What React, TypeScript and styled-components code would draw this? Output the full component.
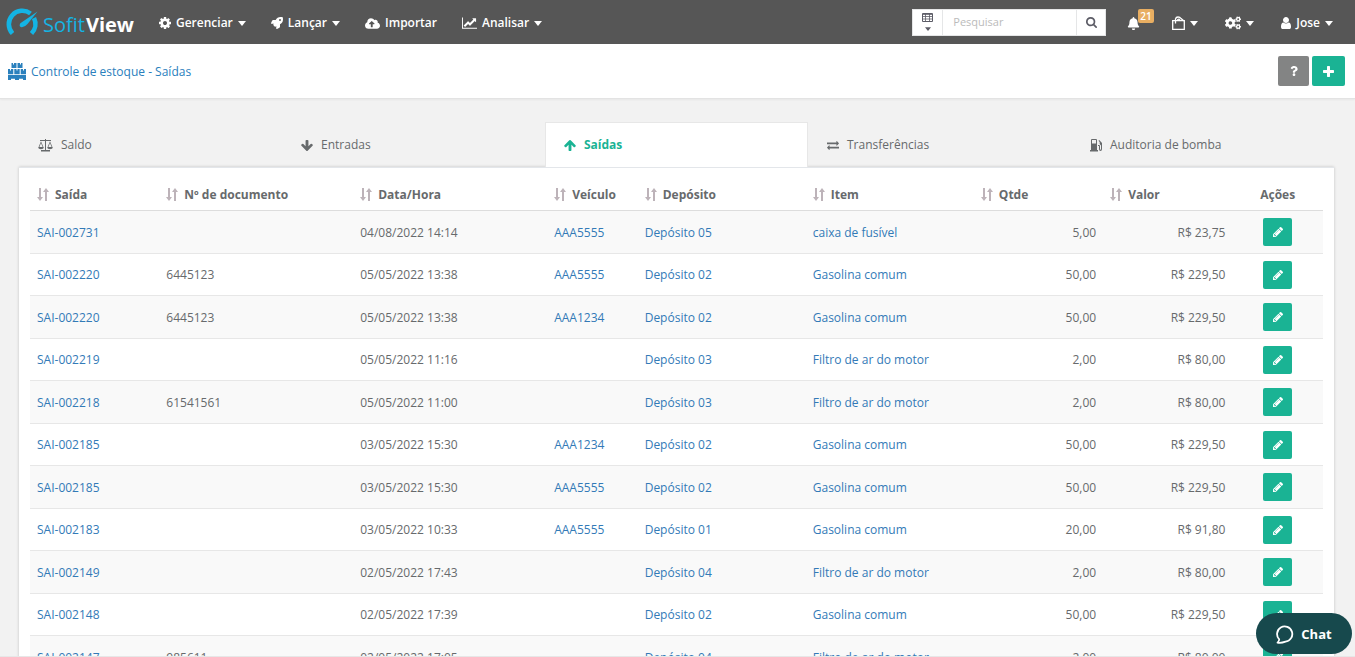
import React from "react";
import styled, { createGlobalStyle, css } from "styled-components";
import { FaBell, FaCloudUploadAlt, FaCogs, FaRocket, FaQuestion } from "react-icons/fa";

const GlobalStyle = createGlobalStyle`
  *, *::before, *::after { box-sizing: border-box; }
  body {
    margin: 0;
    background: #f2f2f2;
    color: #676a6c;
    font-family: "Open Sans", "Liberation Sans", sans-serif;
    font-size: 12px;
    line-height: 18px;
  }
  button, input { font: inherit; }
  a { text-decoration: none; }
`;

/* ---------- icons ---------- */

const glyphs = {
  cog: {
    box: "128 128 1536 1536",
    d: "M1152 896q0-106-75-181t-181-75-181 75-75 181 75 181 181 75 181-75 75-181zm512-109v222q0 12-8 23t-20 13l-185 28q-19 54-39 91 35 50 107 138 10 12 10 25t-9 23q-27 37-99 108t-94 71q-12 0-26-9l-138-108q-44 23-91 38-16 136-29 186-7 28-36 28h-222q-14 0-24.5-8.5t-11.5-21.5l-28-184q-49-16-90-37l-141 107q-10 9-25 9-14 0-25-11-126-114-165-168-7-10-7-23 0-12 8-23 15-21 51-66.5t54-70.5q-27-50-41-99l-183-27q-13-2-21-12.5t-8-23.5v-222q0-12 8-23t19-13l186-28q14-46 39-92-40-57-107-138-10-12-10-24 0-10 9-23 26-36 98.5-107.5t94.5-71.5q13 0 26 10l138 107q44-23 91-38 16-136 29-186 7-28 36-28h222q14 0 24.5 8.5t11.5 21.5l28 184q49 16 90 37l142-107q9-9 24-9 13 0 25 10 129 119 165 170 7 8 7 22 0 12-8 23-15 21-51 66.5t-54 70.5q26 50 41 98l183 28q13 2 21 12.5t8 23.5z",
  },
  chart: {
    box: "0 128 2048 1536",
    d: "M2048 1536v128h-2048v-1536h128v1408h1920zm-128-1248v435q0 21-19.5 29.5t-35.5-7.5l-121-121-633 633q-10 10-23 10t-23-10l-233-233-416 416-192-192 585-585q10-10 23-10t23 10l233 233 464-464-121-121q-16-16-7.5-35.5t29.5-19.5h435q14 0 23 9t9 23z",
  },
  search: {
    box: "64 128 1664 1664",
    d: "M1216 832q0-185-131.5-316.5t-316.5-131.5-316.5 131.5-131.5 316.5 131.5 316.5 316.5 131.5 316.5-131.5 131.5-316.5zm512 832q0 52-38 90t-90 38q-54 0-90-38l-343-342q-179 124-399 124-143 0-273.5-55.5t-225-150-150-225-55.5-273.5 55.5-273.5 150-225 225-150 273.5-55.5 273.5 55.5 225 150 150 225 55.5 273.5q0 220-124 399l343 343q37 37 37 90z",
  },
  user: {
    box: "256 128 1280 1536",
    d: "M1536 1399q0 109-62.5 187t-150.5 78h-854q-88 0-150.5-78t-62.5-187q0-85 8.5-160.5t31.5-152 58.5-131 94-89 134.5-34.5q131 128 313 128t313-128q76 0 134.5 34.5t94 89 58.5 131 31.5 152 8.5 160.5zm-256-887q0 159-112.5 271.5t-271.5 112.5-271.5-112.5-112.5-271.5 112.5-271.5 271.5-112.5 271.5 112.5 112.5 271.5z",
  },
  plus: {
    box: "192 128 1408 1408",
    d: "M1600 736v192q0 40-28 68t-68 28h-416v416q0 40-28 68t-68 28h-192q-40 0-68-28t-28-68v-416h-416q-40 0-68-28t-28-68v-192q0-40 28-68t68-28h416v-416q0-40 28-68t68-28h192q40 0 68 28t28 68v416h416q40 0 68 28t28 68z",
  },
  up: {
    box: "117 192 1558 1472",
    d: "M1675 971q0 51-37 90l-75 75q-38 38-91 38-54 0-90-38l-294-293v704q0 52-37.5 84.5t-90.5 32.5h-128q-53 0-90.5-32.5t-37.5-84.5v-704l-294 293q-36 38-90 38t-90-38l-75-75q-38-38-38-90 0-53 38-91l651-651q35-37 90-37 54 0 91 37l651 651q37 39 37 91z",
  },
  down: {
    box: "0 0 1558 1472",
    d: "M0 693q0-51 37-90l75-75q38-38 91-38 54 0 90 38l294 293v-704q0-52 37.500-84.500t90.500-32.500h128q53 0 90.500 32.500t37.500 84.500v704l294-293q36-38 90-38t90 38l75 75q38 38 38 90 0 53-38 91l-651 651q-35 37-90 37-54 0-91-37l-651-651q-37-39-37-91z",
  },
  exchange: {
    box: "0 288 1792 1344",
    d: "M1792 1184v192q0 13-9.500 22.500t-22.500 9.500h-1376v192q0 13-9.500 22.500t-22.500 9.500q-12 0-24-10l-319-320q-9-9-9-22 0-14 9-23l320-320q9-9 23-9 13 0 22.500 9.500t9.500 22.500v192h1376q13 0 22.500 9.500t9.500 22.500zm0-544q0 14-9 23l-320 320q-9 9-23 9-13 0-22.500-9.500t-9.500-22.500v-192h-1376q-13 0-22.500-9.500t-9.500-22.500v-192q0-13 9.500-22.500t22.500-9.500h1376v-192q0-14 9-23t23-9q12 0 24 10l319 319q9 9 9 23z",
  },
  pencil: {
    box: "128 149 1515 1515",
    d: "M491 1536l91-91-235-235-91 91v107h128v128h107zm523-928q0-22-22-22-10 0-17 7l-542 542q-7 7-7 17 0 22 22 22 10 0 17-7l542-542q7-7 7-17zm-54-192l416 416-832 832h-416v-416zm683 96q0 53-37 90l-166 166-416-416 166-165q36-38 90-38 53 0 91 38l235 234q37 39 37 91z",
  },
  caret: { box: "0 0 8 5", d: "M0 0h8L4 5z" },
  sort: {
    box: "0 0 12 13",
    d: "M2 0h2v9h2L3 13 0 9h2zM8 13h2V4h2L9 0 6 4h2z",
  },
  scale: {
    box: "0 0 15 13",
    d: "M7 0h1v1h5v1H8v9h4v1.500H3V11h4V2H2V1h5zM3 2.200 5.600 8.500H.4zM3 4 1.400 8h3.200zM12 2.200l2.600 6.300H9.400zM12 4l-1.600 4h3.200zM0 8.500h6Q5.500 10.300 3 10.300T0 8.500zm9 0h6q-.5 1.800-3 1.800T9 8.500z",
  },
  pump: {
    box: "0 0 12 13",
    d: "M1 1q0-1 1-1h4q1 0 1 1v10h1v1.500H0V11h1zm1 0v3.500h4V1zM8 6h1q1 0 1 1v3q0 .8.5.8T11 10V6.500L9.700 5V3L8.500 1.800l.7-.7L12 4v6q0 2-1.500 2T9 10V7H8z",
  },
};

type Glyph = keyof typeof glyphs;

const IconSvg = styled.svg`
  flex: none;
  display: block;
  fill: currentColor;
`;

function Icon({ name, w, h }: { name: Glyph; w: number; h: number }) {
  return (
    <IconSvg width={w} height={h} viewBox={glyphs[name].box} fillRule="evenodd" aria-hidden="true">
      <path d={glyphs[name].d} />
    </IconSvg>
  );
}

/* ---------- page shell ---------- */

const Page = styled.div`
  display: flex;
  flex-direction: column;
  height: 100vh;
  overflow: hidden;
  border-bottom: 1px solid #e7e7e7;
`;

const Navbar = styled.header`
  flex: none;
  display: flex;
  align-items: center;
  height: 44px;
  padding: 0 22px 0 6px;
  background: #565656;
  color: #fff;
`;

const Logo = styled.a`
  display: flex;
  align-items: center;
  width: 132px;
  gap: 4px;
  color: #14b4e4;
  font-family: "Open Sans", "Noto Sans", sans-serif;
  font-size: 20px;
  line-height: 30px;
  white-space: nowrap;
  svg { flex: none; }
`;

const LogoText = styled.span`
  padding-top: 5px;
  font-weight: 400;
  strong {
    margin-left: 1px;
    color: #fff;
    font-weight: 700;
  }
`;

const Menu = styled.nav`
  display: flex;
  align-items: center;
  gap: 25px;
  margin-left: 21px;
  padding-top: 2px;
`;

const NavButton = styled.button`
  display: flex;
  align-items: center;
  gap: 5px;
  padding: 0;
  border: 0;
  background: none;
  color: #fff;
  font-weight: 600;
  cursor: pointer;
`;

const Search = styled.form`
  display: flex;
  width: 194px;
  height: 27px;
  margin-left: auto;
  border: 1px solid #e5e6e7;
  background: #fff;
  color: #5c5c66;
`;

const SearchScope = styled.button`
  display: flex;
  flex-direction: column;
  align-items: center;
  justify-content: center;
  gap: 5px;
  width: 29px;
  padding: 0;
  border: 0;
  background: none;
  color: inherit;
`;

const SearchInput = styled.input`
  flex: 1;
  min-width: 0;
  padding: 0 10px;
  border: solid #e5e6e7;
  border-width: 0 1px;
  font-size: 11px;
  outline: 0;
  &::placeholder { color: #bbb; }
`;

const SearchSubmit = styled.button`
  display: flex;
  align-items: center;
  justify-content: center;
  width: 28px;
  padding: 0;
  border: 0;
  background: none;
  color: inherit;
`;

const Tools = styled.div`
  display: flex;
  align-items: center;
  gap: 27px;
  margin-left: 21px;
  padding-top: 2px;
`;

const BellButton = styled(NavButton)`
  position: relative;
  width: 18px;
`;

const Badge = styled.span`
  position: absolute;
  top: -8px;
  left: 11px;
  padding: 0 2px;
  border-radius: 2px;
  background: #e8ae62;
  font-size: 10px;
  line-height: 14px;
`;

const TitleBar = styled.div`
  flex: none;
  display: flex;
  align-items: center;
  gap: 3px;
  height: 55px;
  padding: 0 10px 0 8px;
  border-bottom: 1px solid #e3e3e3;
  background: #fff;
  box-shadow: 0 1px 2px rgba(0, 0, 0, 0.05);
`;

const Title = styled.a`
  display: flex;
  align-items: center;
  gap: 5px;
  margin-right: auto;
  padding-top: 1px;
  color: #2a80bd;
`;

const ActionButton = styled.button<{ $tone: string; $wide?: boolean }>`
  display: flex;
  align-items: center;
  justify-content: center;
  width: ${(p) => (p.$wide ? 33 : 31)}px;
  height: 30px;
  padding: 0;
  border: 0;
  border-radius: 2px;
  background: ${(p) => p.$tone};
  color: #fff;
`;

/* ---------- tabs and table ---------- */

const Content = styled.main`
  flex: 1;
  min-height: 0;
  overflow: hidden;
  padding: 23px 21px 0 19px;
`;

const Tabs = styled.nav`
  display: grid;
  grid-template-columns: repeat(5, 1fr);
`;

const Tab = styled.a<{ $active?: boolean }>`
  display: flex;
  align-items: center;
  gap: 8px;
  height: 45px;
  padding: 0 18px;
  border: 1px solid transparent;
  border-bottom: 0;
  color: #676a6c;
  ${(p) =>
    p.$active &&
    css`
      border-color: #e7e7e7;
      background: #fff;
      color: #1ab394;
      font-weight: 700;
    `}
`;

const Card = styled.section`
  padding: 11px 11px 0;
  border-top: 1px solid #e3e6ea;
  background: #fff;
  box-shadow: 0 0 3px rgba(0, 0, 0, 0.2);
`;

const Table = styled.table`
  width: 100%;
  table-layout: fixed;
  border-spacing: 0;
`;

const Th = styled.th<{ $w: number; $center?: boolean }>`
  width: ${(p) => p.$w}%;
  height: 31px;
  padding: 0 7px;
  text-align: ${(p) => (p.$center ? "center" : "left")};
  font-weight: 700;
  white-space: nowrap;
`;

const SortButton = styled.button`
  display: flex;
  align-items: center;
  gap: 6px;
  padding: 0;
  border: 0;
  background: none;
  color: inherit;
  font-weight: 700;
  svg { color: #bdb3b9; }
`;

const Row = styled.tr`
  height: 42px;
  &:nth-child(odd) {
    height: 43px;
    background: #f9f9f9;
  }
  &:first-child td { border-top-color: #dddddd; }
`;

const Td = styled.td<{ $align?: string }>`
  padding: 1px 7px 0;
  border-top: 1px solid #e7e7e7;
  text-align: ${(p) => p.$align || "left"};
  white-space: nowrap;
`;

const ActionTd = styled(Td)`
  padding-top: 0;
`;

const CellLink = styled.a`
  color: #337ab7;
`;

const EditButton = styled.button`
  display: flex;
  align-items: center;
  justify-content: center;
  width: 29px;
  height: 28px;
  margin: 0 auto;
  padding: 0;
  border: 0;
  border-radius: 2px;
  background: #1ab394;
  color: #fff;
`;

const ChatButton = styled.button`
  position: fixed;
  right: 3px;
  bottom: 3px;
  display: flex;
  align-items: center;
  justify-content: center;
  gap: 7px;
  width: 96px;
  height: 41px;
  padding: 1px 0 0;
  border: 0;
  border-radius: 21px;
  background: #17494d;
  color: #fff;
  font-size: 13px;
  font-weight: 700;
`;

const columns: { label: string; w: number }[] = [
  { label: "Saída", w: 10 },
  { label: "Nº de documento", w: 15 },
  { label: "Data/Hora", w: 15 },
  { label: "Veículo", w: 7 },
  { label: "Depósito", w: 13 },
  { label: "Item", w: 13 },
  { label: "Qtde", w: 10 },
  { label: "Valor", w: 10 },
];

const rows = [
  ["SAI-002731", "", "04/08/2022 14:14", "AAA5555", "Depósito 05", "caixa de fusível", "5,00", "R$ 23,75"],
  ["SAI-002220", "6445123", "05/05/2022 13:38", "AAA5555", "Depósito 02", "Gasolina comum", "50,00", "R$ 229,50"],
  ["SAI-002220", "6445123", "05/05/2022 13:38", "AAA1234", "Depósito 02", "Gasolina comum", "50,00", "R$ 229,50"],
  ["SAI-002219", "", "05/05/2022 11:16", "", "Depósito 03", "Filtro de ar do motor", "2,00", "R$ 80,00"],
  ["SAI-002218", "61541561", "05/05/2022 11:00", "", "Depósito 03", "Filtro de ar do motor", "2,00", "R$ 80,00"],
  ["SAI-002185", "", "03/05/2022 15:30", "AAA1234", "Depósito 02", "Gasolina comum", "50,00", "R$ 229,50"],
  ["SAI-002185", "", "03/05/2022 15:30", "AAA5555", "Depósito 02", "Gasolina comum", "50,00", "R$ 229,50"],
  ["SAI-002183", "", "03/05/2022 10:33", "AAA5555", "Depósito 01", "Gasolina comum", "20,00", "R$ 91,80"],
  ["SAI-002149", "", "02/05/2022 17:43", "", "Depósito 04", "Filtro de ar do motor", "2,00", "R$ 80,00"],
  ["SAI-002148", "", "02/05/2022 17:39", "", "Depósito 02", "Gasolina comum", "50,00", "R$ 229,50"],
  ["SAI-002147", "985611", "02/05/2022 17:05", "", "Depósito 04", "Filtro de ar do motor", "2,00", "R$ 80,00"],
];

const linked = [0, 3, 4, 5];

const DownCaret = () => <Icon name="caret" w={8} h={5} />;

export default function App() {
  return (
    <Page>
      <GlobalStyle />
      <Navbar>
        <Logo href="#" aria-label="SofitView">
          <svg width="33" height="30" viewBox="0 0 33 30" aria-hidden="true">
            <path d="M6.500 26.500A13.500 13.500 0 0 1 24.500 6.500M28 11A13.500 13.500 0 0 1 25.500 26.500" fill="none" stroke="currentColor" strokeWidth="4.600" />
            <path d="M31.500 4.500 21.500 17Q18.500 20.500 15.500 20.200T14.300 16.300z" fill="currentColor" />
          </svg>
          <LogoText>
            Sofit<strong>View</strong>
          </LogoText>
        </Logo>
        <Menu>
          <NavButton><Icon name="cog" w={12} h={12} />Gerenciar<DownCaret /></NavButton>
          <NavButton><FaRocket size={12} />Lançar<DownCaret /></NavButton>
          <NavButton><FaCloudUploadAlt size={15} />Importar</NavButton>
          <NavButton><Icon name="chart" w={15} h={12} />Analisar<DownCaret /></NavButton>
        </Menu>
        <Search onSubmit={(e) => e.preventDefault()}>
          <SearchScope type="button" aria-label="Tipo de pesquisa">
            <svg width="11" height="9" viewBox="0 0 11 9" aria-hidden="true">
              <path d="M.5.500h10v8H.5z" fill="none" stroke="currentColor" />
              <path d="M1 1.500h9M1 3.500h9M1 6h9M3.500 1v7.500M7.500 1v7.500" fill="none" stroke="currentColor" strokeWidth=".8" />
            </svg>
            <Icon name="caret" w={6} h={4} />
          </SearchScope>
          <SearchInput type="text" placeholder="Pesquisar" aria-label="Pesquisar" />
          <SearchSubmit type="submit" aria-label="Buscar"><Icon name="search" w={11} h={11} /></SearchSubmit>
        </Search>
        <Tools>
          <BellButton aria-label="Notificações"><FaBell size={13} /><Badge>21</Badge></BellButton>
          <NavButton aria-label="Documentos">
            <svg width="13" height="15" viewBox="0 0 13 15" aria-hidden="true">
              <path d="M.7 4.700h11.600v8.600H.7zM3.500 7.500V3Q4 1 6 1T9 2.500L12 5M5.500 4.500Q5.500 3 7 3.200L8.500 5" fill="none" stroke="currentColor" strokeWidth="1.300" />
            </svg>
            <DownCaret />
          </NavButton>
          <NavButton aria-label="Configurações"><FaCogs size={16} /><DownCaret /></NavButton>
          <NavButton><Icon name="user" w={10} h={12} />Jose<DownCaret /></NavButton>
        </Tools>
      </Navbar>

      <TitleBar>
        <Title href="#">
          <svg width="18" height="17" viewBox="0 0 18 17" fill="currentColor" aria-hidden="true">
            <path d="M3.500 0H5v1.500h1V0h2.500v5h-5zM9.500 0H12v1.500h1V0h1.500v5h-5zM0 6h2v1.500h1V6h2.300v5.200H0zM6.300 6h2.200v1.500h1V6h2.200v5.200H6.300zM12.700 6H15v1.500h1V6h2v5.200h-5.300zM0 12h18v5h-3v-1.200h-4V17H7v-1.200H3V17H0z" />
          </svg>
          Controle de estoque - Saídas
        </Title>
        <ActionButton $tone="#838484" aria-label="Ajuda"><FaQuestion size={10} /></ActionButton>
        <ActionButton $tone="#1ab394" $wide aria-label="Adicionar"><Icon name="plus" w={11} h={11} /></ActionButton>
      </TitleBar>

      <Content>
        <Tabs>
          <Tab href="#"><Icon name="scale" w={15} h={13} />Saldo</Tab>
          <Tab href="#"><Icon name="down" w={12} h={11} />Entradas</Tab>
          <Tab href="#" $active><Icon name="up" w={12} h={11} />Saídas</Tab>
          <Tab href="#"><Icon name="exchange" w={12} h={9} />Transferências</Tab>
          <Tab href="#"><Icon name="pump" w={12} h={13} />Auditoria de bomba</Tab>
        </Tabs>
        <Card>
          <Table>
            <thead>
              <tr>
                {columns.map((c) => (
                  <Th key={c.label} $w={c.w}>
                    <SortButton><Icon name="sort" w={12} h={13} />{c.label}</SortButton>
                  </Th>
                ))}
                <Th $w={7} $center>Ações</Th>
              </tr>
            </thead>
            <tbody>
              {rows.map((r, i) => (
                <Row key={i}>
                  {r.map((v, j) => (
                    <Td key={j} $align={j > 5 ? "right" : "left"}>
                      {v && linked.includes(j) ? <CellLink href="#">{v}</CellLink> : v}
                    </Td>
                  ))}
                  <ActionTd>
                    <EditButton aria-label={`Editar ${r[0]}`}><Icon name="pencil" w={10} h={10} /></EditButton>
                  </ActionTd>
                </Row>
              ))}
            </tbody>
          </Table>
        </Card>
      </Content>

      <ChatButton>
        <svg width="18" height="19" viewBox="0 0 18 19" aria-hidden="true">
          <path d="M3.200 14.300A7.600 7.600 0 1 1 9.500 16.600Q5 18.300 1.500 17.600 3.200 16.300 3.200 14.300z" fill="none" stroke="currentColor" strokeWidth="1.800" strokeLinejoin="round" />
        </svg>
        Chat
      </ChatButton>
    </Page>
  );
}
